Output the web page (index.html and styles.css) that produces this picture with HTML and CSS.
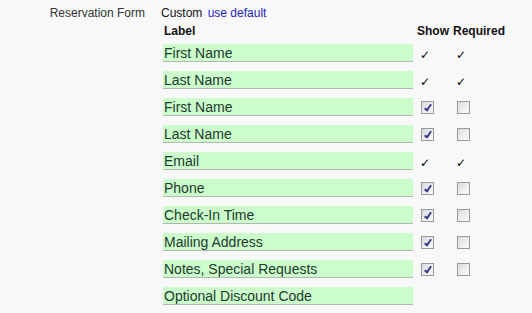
FILE: index.html
```html
<!DOCTYPE html>
<html lang="en">
  <head>
    <meta charset="utf-8" />
    <meta name="viewport" content="width=device-width, initial-scale=1" />
    <title>Reservation Form</title>
    <link rel="stylesheet" href="styles.css">
  </head>
  <body>
    <div class="setting">
      <div class="setting-name">Reservation Form</div>
      <div class="setting-value">
        <div class="mode">Custom <a href="#" class="reset">use default</a></div>
        <!-- one row per form field: label, show, required -->
        <div class="fields">
          <div class="head">Label</div>
          <div class="head">Show</div>
          <div class="head">Required</div>

          <input class="label-input" type="text" value="First Name" />
          <div class="cell show"><span class="tick">&#10003;</span></div>
          <div class="cell req"><span class="tick">&#10003;</span></div>

          <input class="label-input" type="text" value="Last Name" />
          <div class="cell show"><span class="tick">&#10003;</span></div>
          <div class="cell req"><span class="tick">&#10003;</span></div>

          <input class="label-input" type="text" value="First Name" />
          <div class="cell show"><input type="checkbox" checked /></div>
          <div class="cell req"><input type="checkbox" /></div>

          <input class="label-input" type="text" value="Last Name" />
          <div class="cell show"><input type="checkbox" checked /></div>
          <div class="cell req"><input type="checkbox" /></div>

          <input class="label-input" type="text" value="Email" />
          <div class="cell show"><span class="tick">&#10003;</span></div>
          <div class="cell req"><span class="tick">&#10003;</span></div>

          <input class="label-input" type="text" value="Phone" />
          <div class="cell show"><input type="checkbox" checked /></div>
          <div class="cell req"><input type="checkbox" /></div>

          <input class="label-input" type="text" value="Check-In Time" />
          <div class="cell show"><input type="checkbox" checked /></div>
          <div class="cell req"><input type="checkbox" /></div>

          <input class="label-input" type="text" value="Mailing Address" />
          <div class="cell show"><input type="checkbox" checked /></div>
          <div class="cell req"><input type="checkbox" /></div>

          <input class="label-input" type="text" value="Notes, Special Requests" />
          <div class="cell show"><input type="checkbox" checked /></div>
          <div class="cell req"><input type="checkbox" /></div>

          <input class="label-input" type="text" value="Optional Discount Code" />
          <div class="cell show"></div>
          <div class="cell req"></div>
        </div>
      </div>
    </div>
  </body>
</html>
```

FILE: styles.css
```css
body {
  margin: 0;
  background-color: #f8f8f8;
  font-family: "Liberation Sans", Arial, sans-serif;
  font-size: 12px;
  color: #222;
}

.setting {
  display: flex;
  padding-top: 6px;
}

.setting-name {
  width: 145px;
  text-align: right;
  color: #333;
  line-height: 14px;
}

.setting-value {
  margin-left: 16px;
}

.mode {
  line-height: 14px;
  color: #111;
}

.mode .reset {
  color: #1f1fbf;
  text-decoration: none;
  margin-left: 2px;
}

.fields {
  display: grid;
  grid-template-columns: 254px 36px 60px;
  row-gap: 9px;
  margin-top: 4px;
  margin-left: 2px;
}

.head {
  font-weight: bold;
  line-height: 14px;
  color: #111;
  margin-bottom: -3px;
}

.fields .head:first-child {
  padding-left: 1px;
}

.label-input {
  width: 250px;
  height: 18px;
  box-sizing: border-box;
  margin: 0;
  padding: 0 0 0 1px;
  border: 0;
  border-bottom: 1px solid #b0b8b0;
  background-color: #ccfccc;
  font-family: "Liberation Sans", Arial, sans-serif;
  font-size: 14px;
  line-height: 17px;
  color: #1d3a2c;
  outline: none;
}

.cell {
  height: 18px;
  position: relative;
}

.tick {
  position: absolute;
  top: 4px;
  left: 3px;
  font-family: "DejaVu Sans", sans-serif;
  font-size: 12px;
  font-weight: bold;
  line-height: 14px;
  color: #000;
}

input[type='checkbox'] {
  appearance: none;
  -webkit-appearance: none;
  position: absolute;
  top: 3px;
  left: 4px;
  width: 13px;
  height: 13px;
  margin: 0;
  box-sizing: border-box;
  border: 1px solid #999;
  background: linear-gradient(135deg, #dadada 0%, #f0f0f0 60%, #fbfbfb 100%);
}

input[type='checkbox']:checked {
  background: linear-gradient(135deg, #d8d8e4 0%, #efeff5 60%, #fafafc 100%);
}

input[type='checkbox']:checked::after {
  content: "";
  position: absolute;
  left: 4px;
  top: 1px;
  width: 2px;
  height: 6px;
  border: solid #3c3c8c;
  border-width: 0 2px 2px 0;
  transform: rotate(35deg);
}
```
